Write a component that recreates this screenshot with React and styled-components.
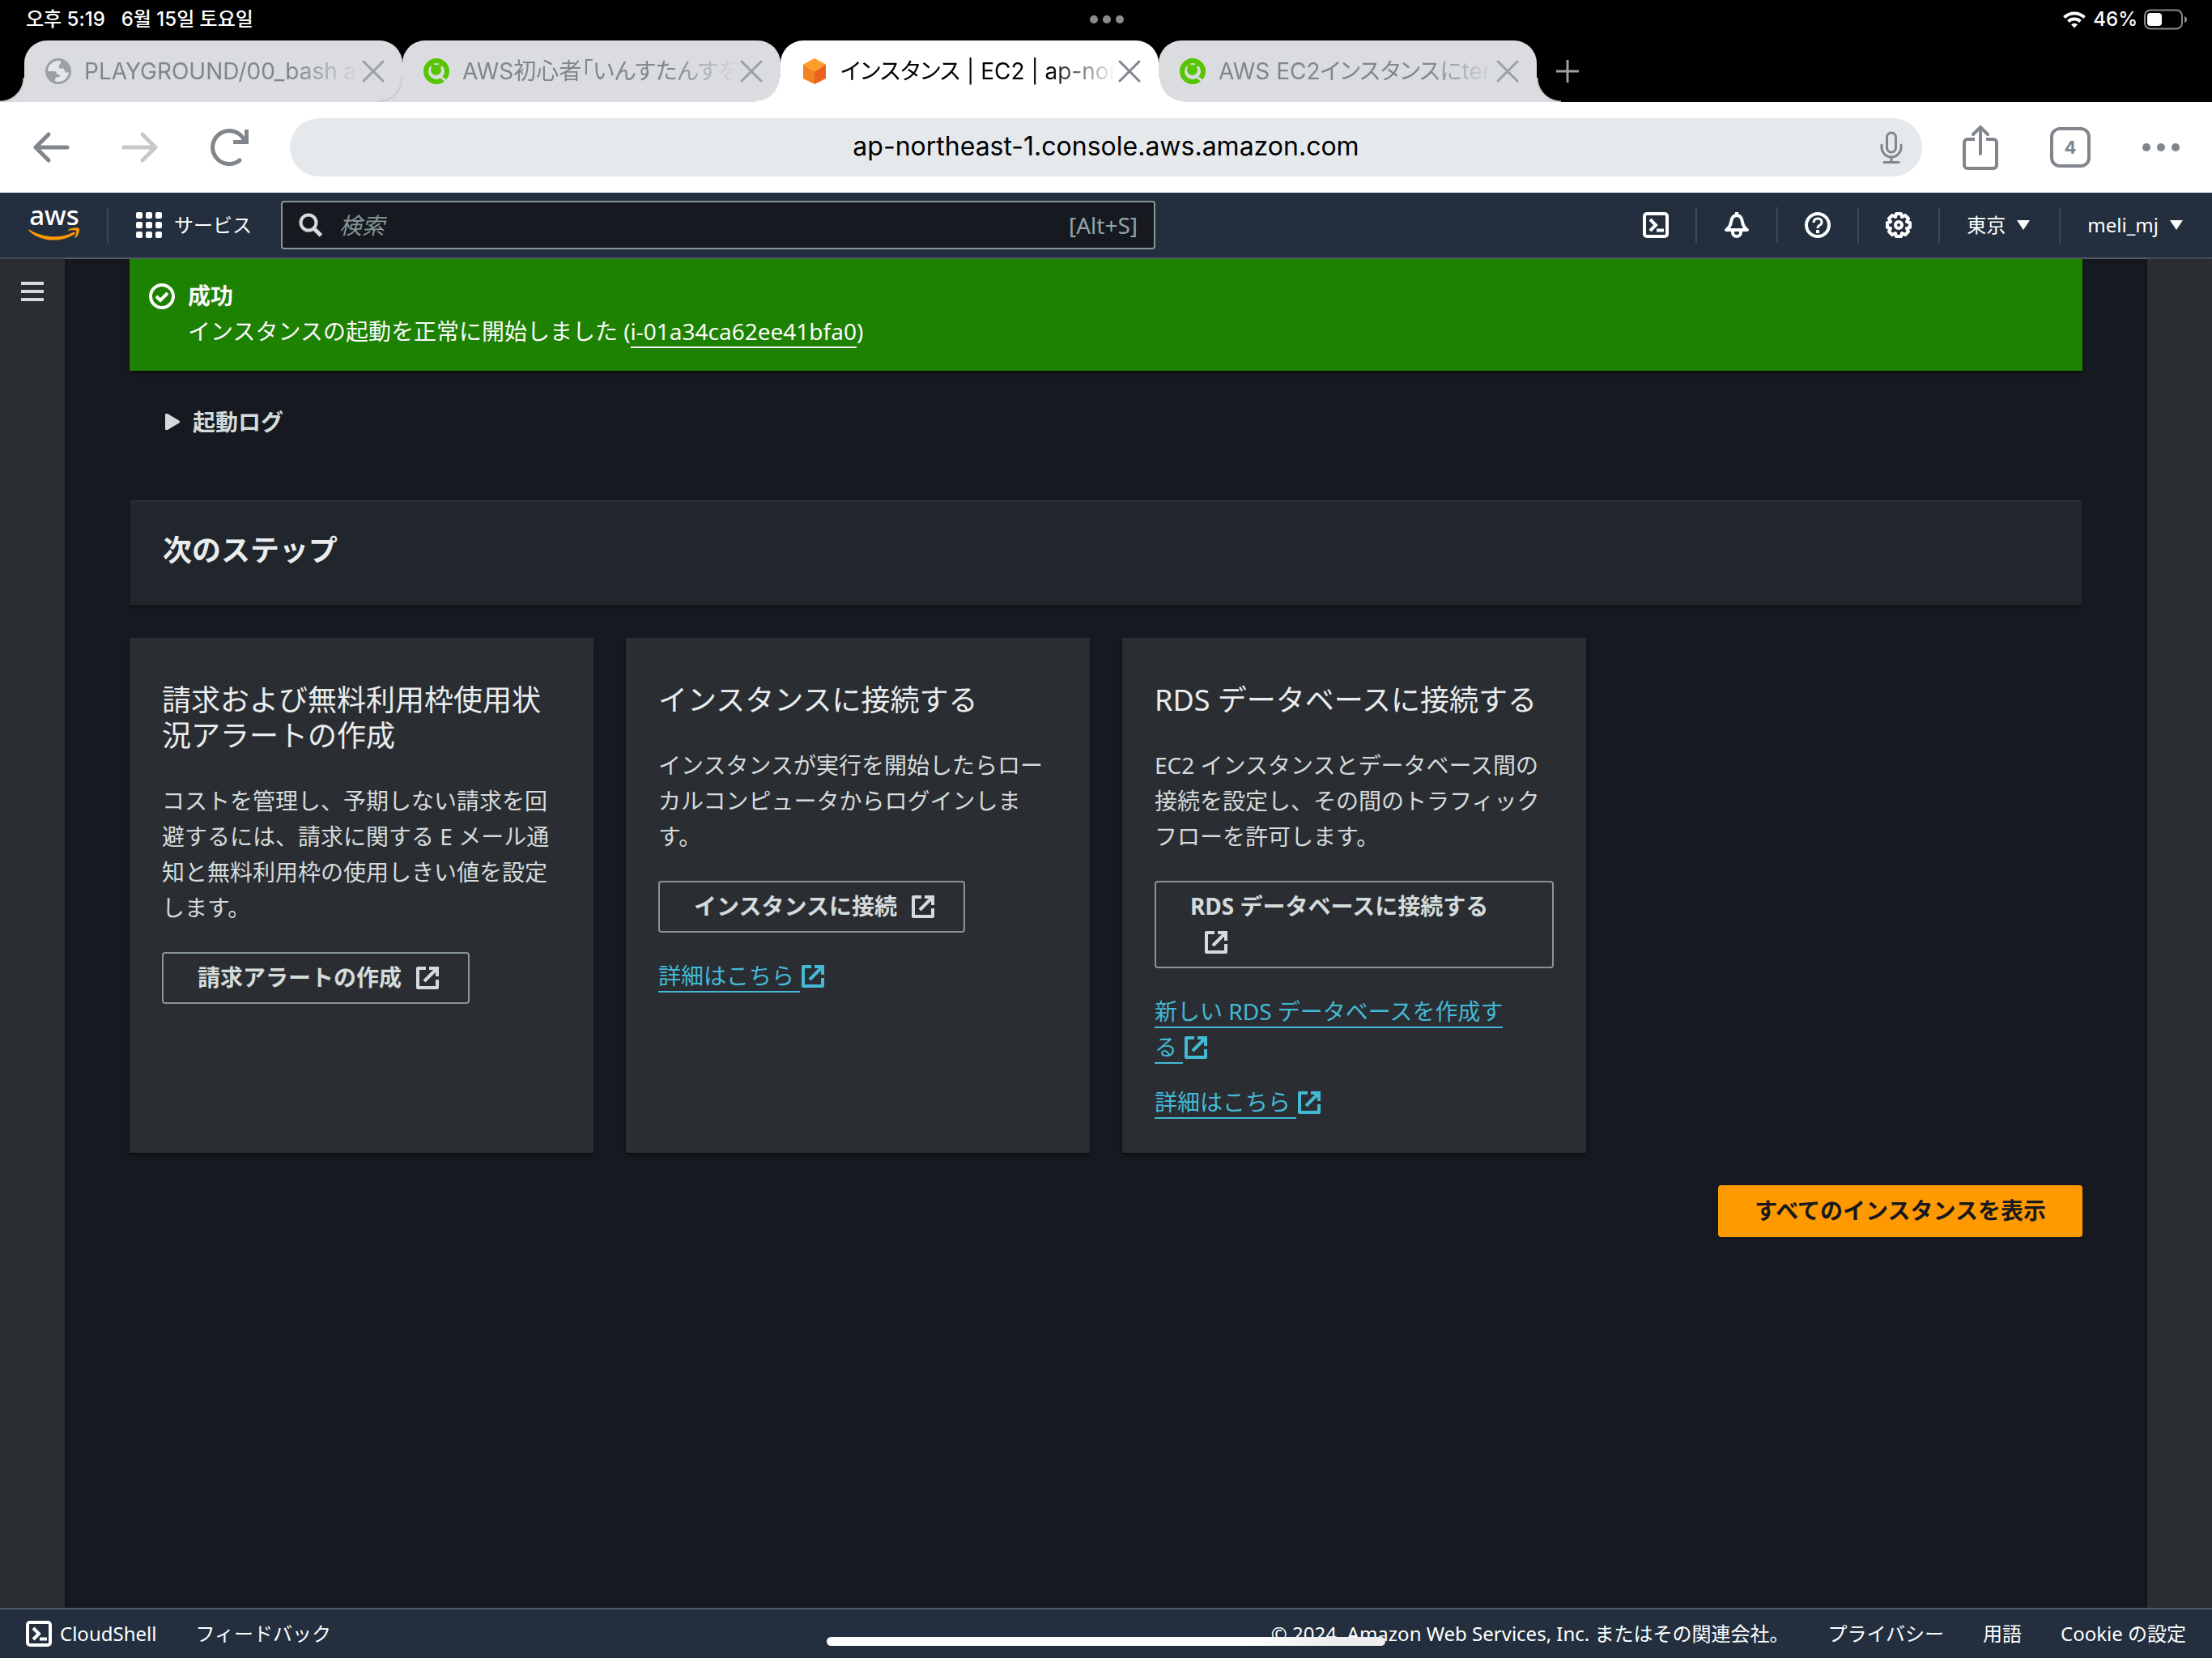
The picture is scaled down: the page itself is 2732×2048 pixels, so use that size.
import React from 'react';
import styled, { createGlobalStyle, css } from 'styled-components';

const uiFont = "'Noto Sans', 'Noto Sans CJK JP', sans-serif";
const systemFont = "Inter, 'Noto Sans CJK JP', 'Noto Sans CJK KR', sans-serif";

const colors = {
  nav: '#232f3e',
  navLine: '#545b64',
  page: '#16191f',
  panel: '#2a2e33',
  header: '#21252c',
  border: '#879596',
  text: '#d5dbdb',
  heading: '#eaeded',
  link: '#44b9d6',
  success: '#1d8102',
  primary: '#ff9900',
  chromeIcon: '#80868b',
  chromeTab: '#dadce0',
};

const GlobalStyle = createGlobalStyle`
  *, *::before, *::after {
    box-sizing: border-box;
  }
  body {
    margin: 0;
    background: ${colors.page};
    color: ${colors.text};
    font-family: ${uiFont};
    font-size: 28px;
    line-height: 44px;
  }
  button, input {
    font: inherit;
    color: inherit;
  }
  h1, h2, h3, p {
    margin: 0;
  }
  svg {
    display: block;
    flex: none;
  }
`;

const Screen = styled.div`
  display: flex;
  flex-direction: column;
  min-height: 100vh;
`;

const IconButton = styled.button`
  display: flex;
  flex: none;
  align-items: center;
  justify-content: center;
  padding: 0;
  border: 0;
  background: none;
  color: ${({ $color }) => $color || 'inherit'};
`;

/* ---------- device status bar ---------- */

const StatusBar = styled.div`
  display: grid;
  grid-template-columns: 1fr auto 1fr;
  align-items: center;
  height: 50px;
  padding: 0 30px 2px 32px;
  background: #000;
  color: #fff;
  font-family: Inter, 'Noto Sans CJK KR', sans-serif;
  font-size: 24px;
  font-weight: 500;
  line-height: 32px;
`;

const StatusGroup = styled.div`
  display: flex;
  align-items: center;
  justify-content: ${({ $end }) => ($end ? 'flex-end' : 'flex-start')};
  gap: ${({ $end }) => ($end ? '8px' : '20px')};
`;

function StatusIcons() {
  return (
    <StatusGroup $end>
      <svg width="30" height="22" viewBox="0 0 30 22" fill="none" stroke="#fff" strokeWidth="4">
        <path d="M2.5 8.5a18 18 0 0 1 25 0" />
        <path d="M7.5 13.5a11 11 0 0 1 15 0" />
        <path d="M15 21.5l-4-4.200a6 6 0 0 1 8 0z" fill="#fff" stroke="none" />
      </svg>
      <span>46%</span>
      <svg width="54" height="26" viewBox="0 0 54 26">
        <rect x="1" y="1.500" width="46" height="23" rx="7" fill="none" stroke="#8a8a8a" strokeWidth="2" />
        <rect x="4" y="5" width="18" height="16" rx="4" fill="#fff" />
        <path d="M50 9v8q3-1 3-4t-3-4z" fill="#8a8a8a" />
      </svg>
    </StatusGroup>
  );
}

/* ---------- browser tabs ---------- */

const TabStrip = styled.div`
  display: flex;
  align-items: center;
  height: 76px;
  padding-left: 30px;
  background: #000;
  font-family: ${systemFont};
  font-feature-settings: 'palt';
`;

const flare = (corner, fill, line) => css`
  content: '';
  position: absolute;
  bottom: 0;
  width: 30px;
  height: 30px;
  background: radial-gradient(circle at top ${corner}, transparent 28px, ${line} 29px, ${fill} 31px);
`;

const tabFill = ({ $active }) => ($active ? '#fff' : colors.chromeTab);
const tabLine = ({ $active }) => ($active ? '#fff' : '#c3c5c9');

const TabItem = styled.div`
  position: relative;
  z-index: ${({ $active }) => ($active ? 1 : 0)};
  display: flex;
  align-items: center;
  flex: 0 1 467px;
  min-width: 0;
  height: 76px;
  padding: 0 21px 0 26px;
  border-radius: 28px 28px 0 0;
  background: ${tabFill};
  color: ${({ $active }) => ($active ? '#000' : colors.chromeIcon)};

  &::before {
    ${(props) => flare('left', tabFill(props), tabLine(props))}
    left: -30px;
  }
  &::after {
    ${(props) => flare('right', tabFill(props), tabLine(props))}
    right: -30px;
  }
`;

const TabTitle = styled.span`
  flex: 1;
  min-width: 0;
  margin: 0 2px 0 16px;
  overflow: hidden;
  white-space: nowrap;
  mask-image: linear-gradient(to right, #000 76%, transparent 100%);
`;

const NewTab = styled(IconButton)`
  margin-left: 24px;
`;

const GlobeIcon = () => (
  <svg width="32" height="32" viewBox="0 0 32 32" fill="#9aa0a6">
    <circle cx="16" cy="16" r="14.500" fill="#e4e6e9" stroke="#9aa0a6" strokeWidth="3" />
    <path d="M19 2v3q0 2-1.500 3t0 4.500h5q1.500 4.500 4.500 5.500l2.500-2Q29 4 19 2z" />
    <path d="M2 16h9q3 0 3 3.500 4 0 4 3.500h-3q-3 1-3 3v4Q3 27 2 16z" />
  </svg>
);

const QiitaIcon = () => (
  <svg width="32" height="32" viewBox="0 0 32 32">
    <circle cx="16" cy="16" r="13" fill="none" stroke="#55c500" strokeWidth="6" />
    <path d="M9 11l1.500-5L15 8.500zM17 8.500L22 6l1 5z" fill="#55c500" />
    <circle cx="15.500" cy="14.500" r="6.500" fill="#55c500" />
    <path d="M22 23.500l8 6" stroke={colors.chromeTab} strokeWidth="3" />
  </svg>
);

const CubeIcon = () => (
  <svg width="32" height="32" viewBox="0 0 32 32">
    <path d="M16 0l14 7.500-14 9L2 7.500z" fill="#ff9d2b" />
    <path d="M2 7.500l14 9V32L2 25z" fill="#f58220" />
    <path d="M30 7.500l-14 9V32l14-7z" fill="#ea621f" />
  </svg>
);

const CloseIcon = () => (
  <svg width="30" height="30" viewBox="0 0 30 30" stroke="currentColor" strokeWidth="3" strokeLinecap="round">
    <path d="M3 3l24 24M27 3L3 27" />
  </svg>
);

const tabs = [
  { title: 'PLAYGROUND/00_bash a', icon: <GlobeIcon /> },
  { title: 'AWS初心者「いんすたんすを', icon: <QiitaIcon /> },
  { title: 'インスタンス | EC2 | ap-nor', icon: <CubeIcon />, active: true },
  { title: 'AWS EC2インスタンスにter', icon: <QiitaIcon /> },
];

function BrowserTabs() {
  return (
    <TabStrip>
      {tabs.map(({ title, icon, active }) => (
        <TabItem key={title} $active={active}>
          {icon}
          <TabTitle>{title}</TabTitle>
          <IconButton aria-label="Close tab" $color={active ? '#80868b' : '#9aa0a6'}>
            <CloseIcon />
          </IconButton>
        </TabItem>
      ))}
      <NewTab aria-label="New tab" $color="#9aa0a6">
        <svg width="28" height="30" viewBox="0 0 28 30" stroke="currentColor" strokeWidth="3">
          <path d="M0 15h28M14 1v28" />
        </svg>
      </NewTab>
    </TabStrip>
  );
}

/* ---------- browser toolbar ---------- */

const Toolbar = styled.div`
  display: flex;
  align-items: center;
  height: 112px;
  padding: 0 40px;
  background: #fff;
  color: ${colors.chromeIcon};
  font-family: ${systemFont};
`;

const NavButtons = styled.div`
  display: flex;
  align-items: center;
  gap: 64px;
  margin-right: 50px;
`;

const ToolButtons = styled.div`
  display: flex;
  align-items: center;
  gap: 64px;
  margin-left: 50px;
`;

const Omnibox = styled.div`
  display: flex;
  align-items: center;
  flex: 1;
  height: 72px;
  padding: 0 24px 0 52px;
  border-radius: 36px;
  background: #e6e9ec;
`;

const AddressInput = styled.input`
  flex: 1;
  min-width: 0;
  padding: 0 0 2px;
  border: 0;
  background: none;
  color: #000;
  font-size: 32px;
  text-align: center;
`;

const TabCount = styled.button`
  width: 50px;
  height: 50px;
  padding: 0;
  border: 4px solid currentColor;
  border-radius: 12px;
  background: none;
  font-size: 22px;
  font-weight: 700;
  line-height: 40px;
`;

const Dots = ({ size, gap, color }) => (
  <svg width={size * 3 + gap * 2} height={size} fill={color || 'currentColor'}>
    {[0, 1, 2].map((i) => (
      <circle key={i} cx={size / 2 + i * (size + gap)} cy={size / 2} r={size / 2} />
    ))}
  </svg>
);

function BrowserToolbar() {
  return (
    <Toolbar>
      <NavButtons>
        <IconButton aria-label="Back">
          <svg width="46" height="40" viewBox="0 0 46 40" fill="none" stroke="currentColor" strokeWidth="5" strokeLinecap="round" strokeLinejoin="round">
            <path d="M43 20H4M20 4L4 20l16 16" />
          </svg>
        </IconButton>
        <IconButton aria-label="Forward" $color="#c8c8c8">
          <svg width="46" height="40" viewBox="0 0 46 40" fill="none" stroke="currentColor" strokeWidth="5" strokeLinecap="round" strokeLinejoin="round">
            <path d="M3 20h39M26 4l16 16-16 16" />
          </svg>
        </IconButton>
        <IconButton aria-label="Reload">
          <svg width="48" height="48" viewBox="0 0 48 48" fill="none" stroke="currentColor" strokeWidth="5">
            <path d="M36 40A20.500 20.500 0 1 1 42 16" strokeLinecap="round" />
            <path d="M44.500 2v15.500H28" />
          </svg>
        </IconButton>
      </NavButtons>
      <Omnibox>
        <AddressInput aria-label="Address" defaultValue="ap-northeast-1.console.aws.amazon.com" />
        <IconButton aria-label="Voice search">
          <svg width="28" height="40" viewBox="0 0 28 40" fill="none" stroke="currentColor" strokeWidth="3" strokeLinecap="round">
            <rect x="8.500" y="2" width="11" height="24" rx="5.500" />
            <path d="M2 17v3a12 12 0 0 0 24 0v-3M14 32v6M5 38.500h18" />
          </svg>
        </IconButton>
      </Omnibox>
      <ToolButtons>
        <IconButton aria-label="Share">
          <svg width="44" height="56" viewBox="0 0 44 56" fill="none" stroke="currentColor" strokeWidth="4">
            <path d="M15 18H6a4 4 0 0 0-4 4v28a4 4 0 0 0 4 4h32a4 4 0 0 0 4-4V22a4 4 0 0 0-4-4h-9" />
            <path d="M22 36V4M13 12l9-9 9 9" strokeLinecap="round" />
          </svg>
        </IconButton>
        <TabCount>4</TabCount>
        <IconButton aria-label="Menu">
          <Dots size={10} gap={8} />
        </IconButton>
      </ToolButtons>
    </Toolbar>
  );
}

/* ---------- console navigation ---------- */

const ConsoleNav = styled.header`
  display: flex;
  align-items: center;
  height: 82px;
  border-bottom: 2px solid ${colors.navLine};
  background: ${colors.nav};
  color: #fff;
  font-size: 24px;
`;

const LogoLink = styled.a`
  flex: none;
  margin-left: 34px;
  margin-right: 32px;
`;

const NavButton = styled.button`
  display: flex;
  align-items: center;
  flex: none;
  gap: 14px;
  height: 44px;
  padding: 0 ${({ $menu }) => ($menu ? 36 : 33)}px 0 33px;
  border: 0;
  border-left: ${({ $first }) => ($first ? 0 : 2)}px solid #414750;
  background: none;
  white-space: nowrap;
`;

const NavTools = styled.div`
  display: flex;
  align-items: center;
  margin-left: auto;
`;

const SearchBox = styled.label`
  display: flex;
  align-items: center;
  flex: 0 1 1080px;
  gap: 20px;
  height: 60px;
  margin-left: 3px;
  padding: 0 20px;
  border: 2px solid ${colors.border};
  border-radius: 4px;
  background: ${colors.page};
  color: #95a5a6;
  font-size: 28px;
`;

const SearchInput = styled.input`
  flex: 1;
  min-width: 0;
  padding: 0;
  border: 0;
  background: none;

  &::placeholder {
    color: #879596;
    font-style: italic;
    opacity: 1;
  }
`;

const AwsLogo = () => (
  <svg width="66" height="44" viewBox="0 0 66 44">
    <text x="33" y="22" textAnchor="middle" fill="#fff" fontFamily="Noto Sans" fontWeight="500" fontSize="33">
      aws
    </text>
    <path d="M2 27.500C18 38 42 39 56 31c2.500-1.200 4 .8 1.500 2.500C42 44 16 43 2 29.500c-1-1.500-.5-2.500 0-2z" fill="#ff9900" />
    <path d="M50 28c4-3 12-3.500 13.500-2s-.5 8.500-4 11.500c-1 .8-1.500.3-1-1 1.200-3 2.500-6.500 1.500-7.500s-5-.7-9-.3c-1.200 0-1.500-.4-1-.7z" fill="#ff9900" />
  </svg>
);

const GridIcon = () => (
  <svg width="34" height="34" viewBox="0 0 34 34" fill="#fff">
    {[1, 13, 25].map((y) => [1, 13, 25].map((x) => <rect key={`${x}-${y}`} x={x} y={y} width="8" height="8" rx="2" />))}
  </svg>
);

const TerminalIcon = () => (
  <svg width="32" height="32" viewBox="0 0 32 32" fill="none" stroke="#fff" strokeWidth="4">
    <rect x="2" y="2" width="28" height="28" rx="3" />
    <path d="M9 9l7 7-7 7M17 22.500h9" />
  </svg>
);

const BellIcon = () => (
  <svg width="32" height="32" viewBox="0 0 32 32" fill="none" stroke="#fff" strokeWidth="4" strokeLinejoin="round">
    <path d="M16 0v4M3 22c4-3 5.500-6 6-10 .8-5 3-8 7-8s6.200 3 7 8c.5 4 2 7 6 10z" />
    <path d="M11 23v2a5 5 0 0 0 10 0v-2" />
  </svg>
);

const HelpIcon = () => (
  <svg width="32" height="32" viewBox="0 0 32 32" fill="none" stroke="#fff" strokeWidth="4">
    <circle cx="16" cy="16" r="14" />
    <path d="M11 13q0-5 5-5t5 4.500q0 2.500-3 4-2 1-2 3.500" strokeWidth="3" />
    <path d="M16 22v4" />
  </svg>
);

const GearIcon = () => (
  <svg width="32" height="32" viewBox="0 0 32 32" fill="none" stroke="#fff" strokeWidth="4">
    <path
      d="M13 2h6l1 4 4-2 4 4-2 4 4 1v6l-4 1 2 4-4 4-4-2-1 4h-6l-1-4-4 2-4-4 2-4-4-1v-6l4-1-2-4 4-4 4 2z"
      strokeLinejoin="round"
    />
    <circle cx="16" cy="16" r="4" />
  </svg>
);

const Caret = () => (
  <svg width="16" height="12" viewBox="0 0 16 12" fill="#fff">
    <path d="M0 0h16L8 12z" />
  </svg>
);

function Navigation() {
  return (
    <ConsoleNav>
      <LogoLink href="#home" aria-label="AWS">
        <AwsLogo />
      </LogoLink>
      <NavButton>
        <GridIcon />
        サービス
      </NavButton>
      <SearchBox>
        <svg width="30" height="30" viewBox="0 0 30 30" fill="none" stroke="#d5dbdb" strokeWidth="4">
          <circle cx="12" cy="12" r="9.500" />
          <path d="M18.500 19l9 9" strokeWidth="5" />
        </svg>
        <SearchInput placeholder="検索" aria-label="検索" />
        <span>[Alt+S]</span>
      </SearchBox>
      <NavTools>
        <NavButton $first aria-label="CloudShell">
          <TerminalIcon />
        </NavButton>
        <NavButton aria-label="通知">
          <BellIcon />
        </NavButton>
        <NavButton aria-label="ヘルプ">
          <HelpIcon />
        </NavButton>
        <NavButton aria-label="設定">
          <GearIcon />
        </NavButton>
        <NavButton $menu>
          東京
          <Caret />
        </NavButton>
        <NavButton $menu>
          meli_mj
          <Caret />
        </NavButton>
      </NavTools>
    </ConsoleNav>
  );
}

/* ---------- page body ---------- */

const Body = styled.div`
  display: flex;
  flex: 1;
`;

const SidePanel = styled.aside`
  flex: 0 0 80px;
  padding: 28px 26px;
  background: ${colors.panel};
  box-shadow: 0 0 3px rgba(0, 0, 0, 0.6);
`;

const Main = styled.main`
  flex: 1;
  min-width: 0;
  padding: 0 80px 80px;
`;

const Banner = styled.section`
  display: flex;
  align-items: flex-start;
  gap: 16px;
  padding: 23px 24px 27px;
  background: ${colors.success};
  box-shadow: 0 2px 4px rgba(0, 0, 0, 0.5);
  color: #fafafa;

  svg {
    margin-top: 7px;
  }
  a {
    border-bottom: 2px solid currentColor;
    color: inherit;
    text-decoration: none;
  }
`;

const BannerTitle = styled.h2`
  font-size: 28px;
  font-weight: 700;
`;

const LogToggle = styled.button`
  display: flex;
  align-items: center;
  gap: 16px;
  margin: 41px 0 75px;
  padding: 0 44px;
  border: 0;
  background: none;
  font-weight: 700;
`;

const SectionHeader = styled.header`
  padding: 38px 40px 45px;
  border: 1px solid #1b1f24;
  border-top: 2px solid ${colors.panel};
  background: ${colors.header};
  box-shadow: 0 2px 2px rgba(0, 0, 0, 0.4);

  h1 {
    color: ${colors.heading};
    font-size: 36px;
    line-height: 44px;
  }
`;

const CardGrid = styled.div`
  display: grid;
  grid-template-columns: repeat(4, 1fr);
  gap: 40px;
  margin: 40px 0;
`;

const Card = styled.section`
  padding: 55px 40px 41px;
  background: ${colors.panel};
  box-shadow: 0 2px 3px rgba(0, 0, 0, 0.5);
`;

const CardTitle = styled.h3`
  margin-bottom: 36px;
  color: ${colors.heading};
  font-size: 36px;
  font-weight: 400;
  line-height: 44px;
`;

const CardText = styled.p`
  margin-bottom: 33px;
`;

const Button = styled.button`
  padding: 7px ${({ $primary }) => ($primary ? 43 : 42)}px 9px;
  border: 2px solid ${({ $primary }) => ($primary ? colors.primary : colors.border)};
  border-radius: 4px;
  background: ${({ $primary }) => ($primary ? colors.primary : 'transparent')};
  color: ${({ $primary }) => ($primary ? colors.page : colors.text)};
  font-weight: 700;
  text-align: left;

  svg {
    display: inline-block;
    margin: 0 -8px 0 16px;
    vertical-align: -6px;
  }
`;

const Links = styled.div`
  display: grid;
  gap: 24px;
  margin-top: 31px;
`;

const ExternalLink = styled.a`
  color: ${colors.link};
  text-decoration: none;

  svg {
    display: inline-block;
    vertical-align: -6px;
  }
`;

const Underlined = styled.span`
  border-bottom: 2px solid currentColor;
`;

const NoWrap = styled.span`
  display: inline-block;
  white-space: pre;
`;

const Actions = styled.div`
  display: flex;
  justify-content: flex-end;
`;

const ExternalIcon = () => (
  <svg width="32" height="32" viewBox="0 0 32 32" fill="none" stroke="currentColor" strokeWidth="4" aria-hidden="true">
    <path d="M14 4H4v24h24V18" strokeLinejoin="round" />
    <path d="M18 4h10v10M28 4L12 20" />
  </svg>
);

// keeps the last character on the same line as the icon
function DocLink({ text }) {
  return (
    <div>
      <ExternalLink href="#docs">
        <Underlined>{text.slice(0, -1)}</Underlined>
        <NoWrap>
          <Underlined>{`${text.slice(-1)} `}</Underlined>
          <ExternalIcon />
        </NoWrap>
      </ExternalLink>
    </div>
  );
}

const steps = [
  {
    title: '請求および無料利用枠使用状況アラートの作成',
    text: 'コストを管理し、予期しない請求を回避するには、請求に関する E メール通知と無料利用枠の使用しきい値を設定します。',
    action: '請求アラートの作成',
    links: [],
  },
  {
    title: 'インスタンスに接続する',
    text: 'インスタンスが実行を開始したらローカルコンピュータからログインします。',
    action: 'インスタンスに接続',
    links: ['詳細はこちら'],
  },
  {
    title: 'RDS データベースに接続する',
    text: 'EC2 インスタンスとデータベース間の接続を設定し、その間のトラフィックフローを許可します。',
    action: 'RDS データベースに接続する',
    links: ['新しい RDS データベースを作成する', '詳細はこちら'],
  },
];

function StepCard({ title, text, action, links }) {
  return (
    <Card>
      <CardTitle>{title}</CardTitle>
      <CardText>{text}</CardText>
      <Button>
        {action}
        <ExternalIcon />
      </Button>
      {links.length > 0 && (
        <Links>
          {links.map((link) => (
            <DocLink key={link} text={link} />
          ))}
        </Links>
      )}
    </Card>
  );
}

function Content() {
  return (
    <Body>
      <SidePanel>
        <IconButton aria-label="メニュー">
          <svg width="28" height="24" fill="#d5dbdb">
            <path d="M0 0h28v4H0zM0 10h28v4H0zM0 20h28v4H0z" />
          </svg>
        </IconButton>
      </SidePanel>
      <Main>
        <Banner>
          <svg width="32" height="32" viewBox="0 0 32 32" fill="none" stroke="#fff" strokeWidth="4">
            <circle cx="16" cy="16" r="14" />
            <path d="M9 16l5 5 9-9" />
          </svg>
          <div>
            <BannerTitle>成功</BannerTitle>
            <p>
              インスタンスの起動を正常に開始しました (<a href="#instance">i-01a34ca62ee41bfa0</a>)
            </p>
          </div>
        </Banner>
        <LogToggle>
          <svg width="18" height="20" viewBox="0 0 18 20" fill="currentColor">
            <path d="M1 0h2l15 9v2L3 20H1q-1 0-1-1V1q0-1 1-1z" />
          </svg>
          起動ログ
        </LogToggle>
        <SectionHeader>
          <h1>次のステップ</h1>
        </SectionHeader>
        <CardGrid>
          {steps.map((step) => (
            <StepCard key={step.title} {...step} />
          ))}
        </CardGrid>
        <Actions>
          <Button $primary>すべてのインスタンスを表示</Button>
        </Actions>
      </Main>
      <SidePanel />
    </Body>
  );
}

/* ---------- footer ---------- */

const FooterBar = styled.footer`
  display: flex;
  align-items: center;
  gap: 48px;
  height: 62px;
  padding: 0 32px;
  border-top: 2px solid ${colors.navLine};
  background: ${colors.nav};
  color: #fff;
  font-size: 24px;

  a {
    color: inherit;
    text-decoration: none;
  }
`;

const ShellButton = styled(IconButton)`
  gap: 10px;
`;

const Copyright = styled.span`
  margin-left: auto;
`;

const HomeIndicator = styled.div`
  position: fixed;
  bottom: 15px;
  left: 50%;
  z-index: 2;
  width: 690px;
  height: 11px;
  margin-left: -345px;
  border-radius: 6px;
  background: linear-gradient(to right, #fff 75%, #eee 90%);
`;

function Footer() {
  return (
    <FooterBar>
      <ShellButton>
        <TerminalIcon />
        CloudShell
      </ShellButton>
      <a href="#feedback">フィードバック</a>
      <Copyright>© 2024, Amazon Web Services, Inc. またはその関連会社。</Copyright>
      <a href="#privacy">プライバシー</a>
      <a href="#terms">用語</a>
      <a href="#cookies">Cookie の設定</a>
    </FooterBar>
  );
}

export default function App() {
  return (
    <Screen>
      <GlobalStyle />
      <StatusBar>
        <StatusGroup>
          <span>오후 5:19</span>
          <span>6월 15일 토요일</span>
        </StatusGroup>
        <Dots size={10} gap={6} color="#8c8c8c" />
        <StatusIcons />
      </StatusBar>
      <BrowserTabs />
      <BrowserToolbar />
      <Navigation />
      <Content />
      <Footer />
      <HomeIndicator />
    </Screen>
  );
}
